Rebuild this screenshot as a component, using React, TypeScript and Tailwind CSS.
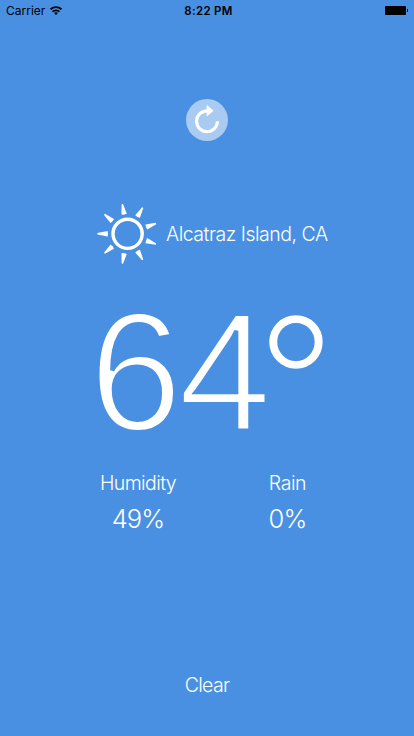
const RAYS = [-10, 30, 70, 110, 150, 190, 230, 270, 310];

function StatusBar() {
  return (
    <header className="grid h-5 grid-cols-3 items-center pl-[6px] pr-[6px] text-[12px] leading-5 text-black">
      <div className="flex items-center gap-[5px] pt-px font-normal">
        <span>Carrier</span>
        <svg className="-mt-[2px]" width="12" height="9" viewBox="0 0 12 9" fill="none" stroke="black" strokeWidth="1.8">
          <path d="M0.5 3.3a7.9 7.9 0 0 1 11 0" />
          <path d="M2.6 5.7a4.8 4.8 0 0 1 6.8 0" />
          <path d="M6 9 4.1 7.1a2.7 2.7 0 0 1 3.8 0Z" fill="black" stroke="none" />
        </svg>
      </div>
      <span className="pl-[3px] pt-px text-center text-[11.5px] font-semibold tracking-[0.3px]">8:22 PM</span>
      <div className="flex items-center justify-end gap-px">
        <span className="h-[9px] w-[21px] rounded-[1px] bg-black" />
        <span className="h-[3px] w-px bg-black" />
      </div>
    </header>
  );
}

function Sun() {
  return (
    <svg className="shrink-0" width="62" height="62" viewBox="-31.6 -30.8 62 62" fill="white">
      <circle r="14.6" fill="none" stroke="white" strokeWidth="3.4" />
      {RAYS.map((a) => (
        <path key={a} d="M-0.7 -30.2 H0.7 L2.7 -20 Q0 -19.2 -2.7 -20 Z" transform={`rotate(${a})`} />
      ))}
    </svg>
  );
}

export default function App() {
  return (
    <main className="flex h-[736px] w-[414px] flex-col overflow-hidden bg-[#4990e2] font-['Inter','Liberation_Sans',sans-serif] font-light text-white">
      <StatusBar />
      <button className="mt-[79px] ml-[186px] size-[42px] shrink-0 rounded-full bg-[#a9caf1]">
        <svg width="42" height="42" viewBox="0 0 42 42" fill="none">
          <path d="M21 11.9a10.4 10.4 0 1 0 10.4 10.4" stroke="white" strokeWidth="3.1" />
          <path d="M20.7 5.8 27.6 11.7 20.7 17.4Z" fill="white" />
        </svg>
      </button>
      <section className="mt-[62px] ml-[96px] flex h-[62px] shrink-0 items-center">
        <Sun />
        <span className="ml-[8px] whitespace-nowrap pt-[2px] text-[19.5px] tracking-[-0.48px]">Alcatraz Island, CA</span>
      </section>
      <section className="mt-[37px] ml-[89px] flex h-[140px] shrink-0 items-start whitespace-nowrap font-['Liberation_Sans',sans-serif] font-normal leading-[140px]">
        <span className="text-[168px] tracking-[-4.5px] [-webkit-text-stroke:4px_#4990e2]">64</span>
        <span className="-ml-[11px] pt-[13px] text-[200px] [-webkit-text-stroke:2.6px_#4990e2]">°</span>
      </section>
      <section className="mt-[26px] ml-[63px] grid shrink-0 grid-cols-2 text-center">
        <div className="w-[150px]">
          <p className="text-[19.5px] leading-[30px] tracking-[-0.6px]">Humidity</p>
          <p className="text-[25.5px] leading-[42px] tracking-[-0.9px]">49%</p>
        </div>
        <div className="w-[98px]">
          <p className="text-[19.5px] leading-[30px] tracking-[-0.4px]">Rain</p>
          <p className="text-[25.5px] leading-[42px] tracking-[-0.7px]">0%</p>
        </div>
      </section>
      <button className="mt-[130px] w-[414px] text-[19.5px] leading-[30px] tracking-[-0.7px]">Clear</button>
    </main>
  );
}
